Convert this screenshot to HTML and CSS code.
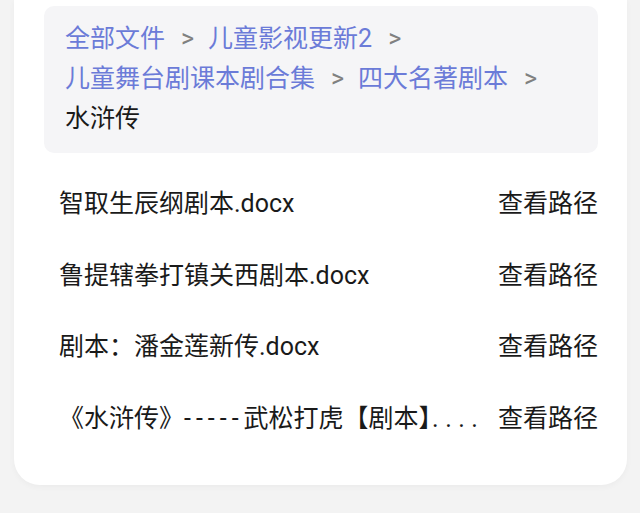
FILE: index.html
```html
<!DOCTYPE html>
<html lang="zh-CN">
<head>
<meta charset="utf-8">
<title>水浒传</title>
<link rel="stylesheet" href="styles.css">
</head>
<body>
<div class="card">
  <div class="crumbs">
    <span class="item"><span class="link">全部文件</span><span class="sep">&gt;</span></span>
    <span class="item"><span class="link">儿童影视更新2</span><span class="sep">&gt;</span></span>
    <span class="item"><span class="link">儿童舞台剧课本剧合集</span><span class="sep">&gt;</span></span>
    <span class="item"><span class="link">四大名著剧本</span><span class="sep">&gt;</span></span>
    <span class="item"><span class="current">水浒传</span></span>
  </div>
  <ul class="files">
    <li class="row"><span class="name">智取生辰纲剧本.docx</span><span class="action">查看路径</span></li>
    <li class="row"><span class="name">鲁提辖拳打镇关西剧本.docx</span><span class="action">查看路径</span></li>
    <li class="row"><span class="name">剧本：潘金莲新传.docx</span><span class="action">查看路径</span></li>
    <li class="row"><span class="name">《水浒传》<span class="dash">-----</span>武松打虎【剧本<span class="half">】</span><span class="dots">....</span></span><span class="action">查看路径</span></li>
  </ul>
</div>
</body>
</html>
```
FILE: styles.css
```css
html, body {
  margin: 0;
  padding: 0;
}
body {
  background: #f3f3f3;
  font-family: Roboto, "Noto Sans CJK SC", sans-serif;
  font-size: 25px;
  color: #1a1a1a;
  width: 640px;
  height: 513px;
  overflow: hidden;
}
.card {
  margin: 0 13px 0 14px;
  background: #ffffff;
  border-radius: 0 0 26px 26px;
  padding: 6px 29px 33px 30px;
  box-shadow: 0 2px 6px rgba(0, 0, 0, 0.035);
}
.crumbs {
  background: #f5f5f7;
  border-radius: 10px;
  padding: 13px 22px 14px 21px;
  line-height: 40px;
  display: flex;
  flex-wrap: wrap;
}
.item {
  white-space: nowrap;
}
.link {
  color: #6b7bd8;
}
.sep {
  color: #808080;
  margin: 0 14px 0 16px;
}
.current {
  color: #1a1a1a;
}
.files {
  list-style: none;
  margin: 12px 0 0;
  padding: 0;
}
.row {
  display: flex;
  align-items: center;
  height: 71.7px;
  padding-left: 15px;
}
.name {
  flex: 1;
  min-width: 0;
  white-space: nowrap;
}
.action {
  flex: none;
  margin-left: 20px;
}
.dash {
  letter-spacing: 5px;
}
.half {
  font-family: "Noto Sans CJK SC", sans-serif;
  font-feature-settings: "halt" 1;
}
.dots {
  letter-spacing: 6.5px;
  margin-left: 1px;
}
```
